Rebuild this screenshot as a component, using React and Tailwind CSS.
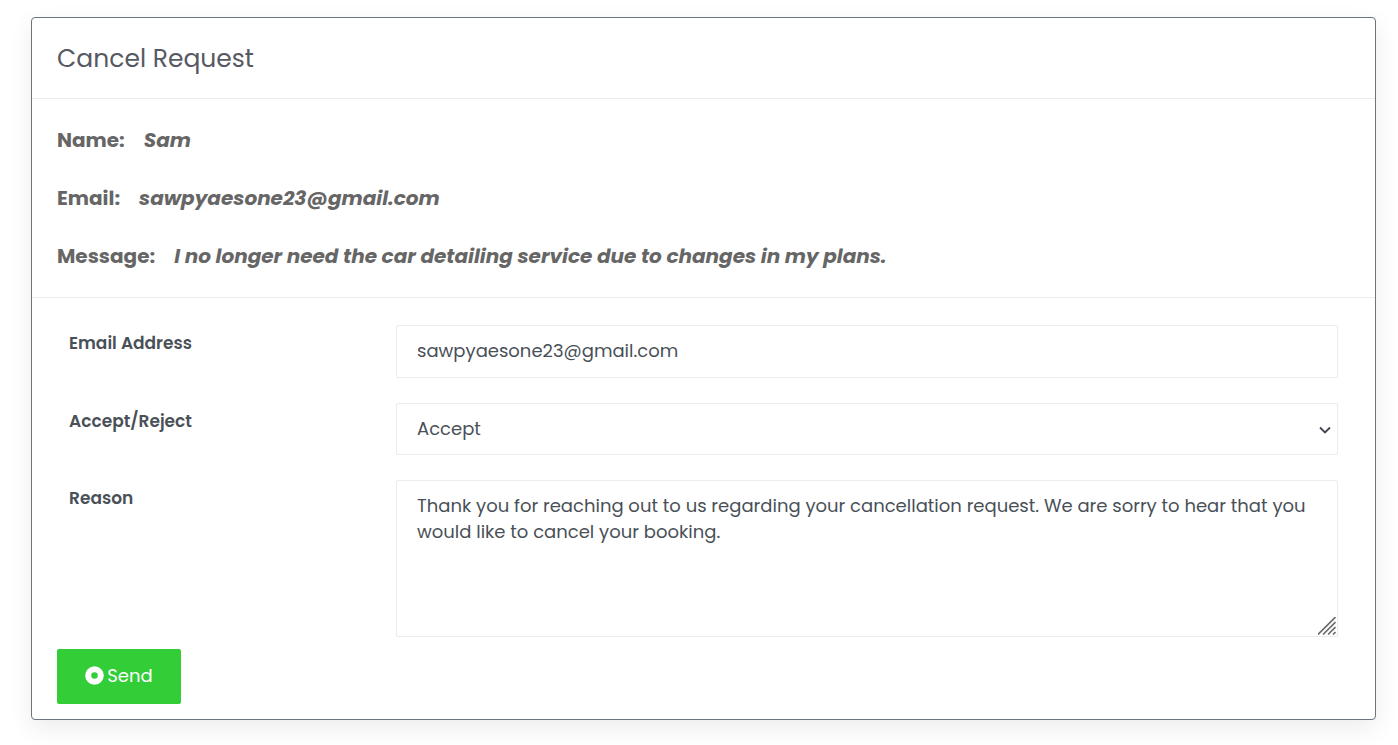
import React from "react";

const details = [
  { label: "Name:", value: "Sam" },
  { label: "Email:", value: "sawpyaesone23@gmail.com" },
  { label: "Message:", value: "I no longer need the car detailing service due to changes in my plans." },
];

const control =
  "block w-full rounded-xs border border-[#ebebf0] bg-white px-5 text-[18px] text-[#495057] outline-none focus:border-gray-400";

function Field({ id, label, children }) {
  return (
    <div className="grid grid-cols-[1fr_3fr] gap-[13px] px-3">
      <label htmlFor={id} className="pt-[5px] text-[17px] leading-[26px] font-semibold text-[#495057]">
        {label}
      </label>
      <div className="relative">{children}</div>
    </div>
  );
}

export default function App() {
  return (
    <main className="bg-white pt-[17px] pr-[22px] pb-[25px] pl-[31px] font-['Poppins','Inter',sans-serif]">
      <section className="rounded border border-[#6c757d] bg-white shadow-[0_8px_24px_rgba(0,0,0,0.08)]">
        <header className="border-b border-[#ebebeb] px-[25px] pt-[21px] pb-[19px]">
          <h1 className="text-[25px] leading-10 font-normal text-[#575962]">Cancel Request</h1>
        </header>

        <div className="flex flex-col gap-7 border-b border-[#ebebeb] px-[25px] pt-[26px] pb-[26px] text-[20px] leading-[30px] font-bold text-[#666]">
          {details.map((d) => (
            <p key={d.label} className="flex gap-[19px]">
              <span>{d.label}</span>
              <em>{d.value}</em>
            </p>
          ))}
        </div>

        <form className="px-[25px] pt-[27px] pb-[15px]" onSubmit={(e) => e.preventDefault()}>
          <div className="flex flex-col gap-[25px]">
            <Field id="email" label="Email Address">
              <input id="email" type="email" defaultValue="sawpyaesone23@gmail.com" className={`${control} h-[53px] pb-0.5`} />
            </Field>
            <Field id="decision" label="Accept/Reject">
              <select id="decision" defaultValue="Accept" className={`${control} h-[52px] appearance-none pb-0.5`}>
                <option>Accept</option>
                <option>Reject</option>
              </select>
              <svg
                className="pointer-events-none absolute top-[23px] right-[7px] h-2 w-3"
                viewBox="0 0 12 8"
                fill="none"
                stroke="#3f464d"
                strokeWidth="1.8"
                aria-hidden="true"
              >
                <path d="M1 1.5 6 6.5 11 1.5" />
              </svg>
            </Field>
            <Field id="reason" label="Reason">
              <textarea
                id="reason"
                defaultValue="Thank you for reaching out to us regarding your cancellation request. We are sorry to hear that you would like to cancel your booking."
                className={`${control} h-[157px] resize-none py-3 leading-[26px]`}
              />
              <svg
                className="pointer-events-none absolute right-0.5 bottom-0.5 h-[18px] w-[18px]"
                viewBox="0 0 18 18"
                stroke="#6b6b6b"
                strokeWidth="1.6"
                aria-hidden="true"
              >
                <path d="M0 17.5 17.5 0M5 17.5 17.5 5M10 17.5 17.5 10M15 17.5 17.5 15" />
              </svg>
            </Field>
          </div>

          <button
            type="submit"
            className="mt-3 flex h-[55px] w-[124px] items-center justify-center gap-[3px] rounded-xs bg-[#32cd37] pb-0.5 text-[18px] text-white"
          >
            <svg className="h-[19px] w-[19px]" viewBox="0 0 19 19" aria-hidden="true">
              <circle cx="9.5" cy="9.5" r="6.3" fill="none" stroke="#fff" strokeWidth="6" />
            </svg>
            Send
          </button>
        </form>
      </section>
    </main>
  );
}
